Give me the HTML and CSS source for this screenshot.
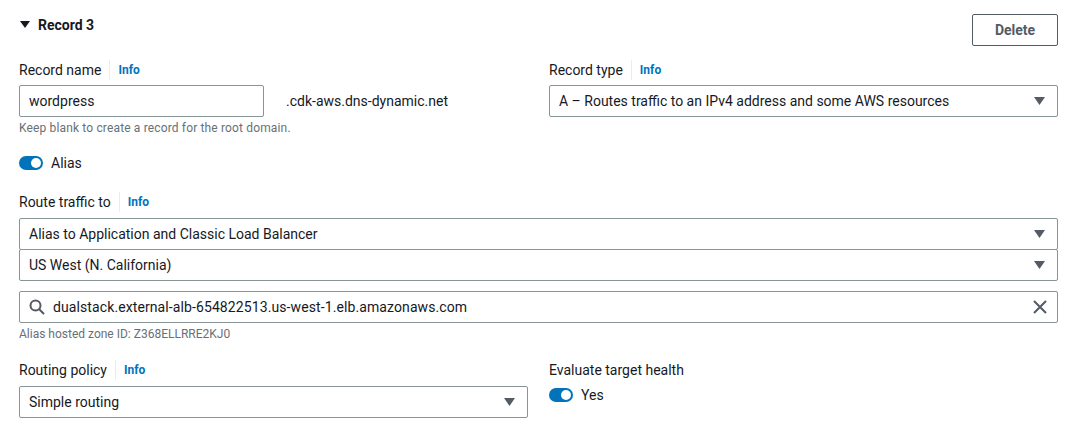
FILE: index.html
```html
<!DOCTYPE html>
<html>
<head>
<meta charset="utf-8">
<link rel="stylesheet" href="styles.css">
</head>
<body>
<div class="page">
  <div class="header">
    <div class="title">
      <svg class="caret" width="10" height="8" viewBox="0 0 10 8"><path d="M0 0 H10 L5 7 Z" fill="#16191f"/></svg>
      <span>Record 3</span>
    </div>
    <button class="btn">Delete</button>
  </div>

  <div class="cols first">
    <div class="col">
      <div class="label"><span>Record name</span><span class="sep"></span><a class="info">Info</a></div>
      <div class="name-row">
        <div class="input name">wordpress</div>
        <span class="suffix">.cdk-aws.dns-dynamic.net</span>
      </div>
      <div class="help">Keep blank to create a record for the root domain.</div>
    </div>
    <div class="col">
      <div class="label"><span>Record type</span><span class="sep"></span><a class="info">Info</a></div>
      <div class="input select">
        <span>A – Routes traffic to an IPv4 address and some AWS resources</span>
        <svg class="arrow" width="11" height="8" viewBox="0 0 11 8"><path d="M0 0 H11 L5.5 8 Z" fill="#545b64"/></svg>
      </div>
    </div>
  </div>

  <div class="toggle-row alias">
    <span class="toggle"><span class="knob"></span></span>
    <span>Alias</span>
  </div>

  <div class="label route"><span>Route traffic to</span><span class="sep"></span><a class="info">Info</a></div>
  <div class="input select">
    <span>Alias to Application and Classic Load Balancer</span>
    <svg class="arrow" width="11" height="8" viewBox="0 0 11 8"><path d="M0 0 H11 L5.5 8 Z" fill="#545b64"/></svg>
  </div>
  <div class="input select stacked">
    <span>US West (N. California)</span>
    <svg class="arrow" width="11" height="8" viewBox="0 0 11 8"><path d="M0 0 H11 L5.5 8 Z" fill="#545b64"/></svg>
  </div>
  <div class="input search">
    <svg class="mag" width="16" height="16" viewBox="0 0 16 16"><circle cx="6.5" cy="6.5" r="5" fill="none" stroke="#545b64" stroke-width="2"/><path d="M10.2 10.2 L14.5 14.5" stroke="#545b64" stroke-width="2" stroke-linecap="round"/></svg>
    <span class="grow">dualstack.external-alb-654822513.us-west-1.elb.amazonaws.com</span>
    <svg class="clear" width="14" height="14" viewBox="0 0 14 14"><path d="M1 1 L13 13 M13 1 L1 13" stroke="#545b64" stroke-width="2"/></svg>
  </div>
  <div class="help zone">Alias hosted zone ID: Z368ELLRRE2KJ0</div>

  <div class="cols last">
    <div class="col">
      <div class="label"><span>Routing policy</span><span class="sep"></span><a class="info">Info</a></div>
      <div class="input select">
        <span>Simple routing</span>
        <svg class="arrow" width="11" height="8" viewBox="0 0 11 8"><path d="M0 0 H11 L5.5 8 Z" fill="#545b64"/></svg>
      </div>
    </div>
    <div class="col">
      <div class="label"><span>Evaluate target health</span></div>
      <div class="toggle-row yes">
        <span class="toggle"><span class="knob"></span></span>
        <span>Yes</span>
      </div>
    </div>
  </div>
</div>
</body>
</html>
```

FILE: styles.css
```css
* { box-sizing: border-box; }
body {
  margin: 0;
  background: #fff;
  font-family: Roboto, "Liberation Sans", Arial, sans-serif;
  font-size: 14px;
  color: #16191f;
}
.page {
  padding: 14px 21px 0 19px;
}
.header {
  display: flex;
  justify-content: space-between;
  align-items: flex-start;
}
.title {
  display: flex;
  align-items: center;
  gap: 8px;
  font-weight: 700;
  line-height: 20px;
  padding: 1px 0 0 1px;
}
.caret { display: block; }
.btn {
  width: 86px;
  height: 32px;
  border: 1px solid #545b64;
  border-radius: 2px;
  background: #fff;
  color: #545b64;
  font: 700 14px Roboto, "Liberation Sans", Arial, sans-serif;
  padding: 0;
}
.cols {
  display: grid;
  grid-template-columns: 1fr 1fr;
  column-gap: 21px;
}
.cols.first { margin-top: 14px; }
.label {
  display: flex;
  align-items: center;
  height: 20px;
  line-height: 20px;
  margin-bottom: 5px;
}
.sep {
  width: 1px;
  height: 20px;
  background: #eaeded;
  margin: 0 8px;
}
.info {
  color: #0073bb;
  font-weight: 700;
  font-size: 12px;
}
.input {
  height: 32px;
  border: 1px solid #879596;
  border-radius: 2px;
  display: flex;
  align-items: center;
  padding: 0 12px 0 9px;
  background: #fff;
}
.name-row {
  display: flex;
  align-items: center;
}
.input.name { width: 245px; }
.suffix { margin-left: 22px; }
.help {
  font-size: 12px;
  line-height: 16px;
  color: #687078;
  margin-top: 3px;
  letter-spacing: 0.15px;
}
.select { justify-content: space-between; }
.arrow { display: block; flex: none; }
.toggle-row {
  display: flex;
  align-items: center;
  gap: 8px;
  line-height: 20px;
}
.toggle-row.alias { margin-top: 17px; }
.toggle {
  width: 24px;
  height: 14px;
  border-radius: 7px;
  background: #0073bb;
  position: relative;
  flex: none;
}
.knob {
  position: absolute;
  right: 2px;
  top: 2px;
  width: 10px;
  height: 10px;
  border-radius: 50%;
  background: #fff;
}
.label.route { margin-top: 19px; margin-bottom: 6px; }
.stacked { margin-top: -1px; }
.search {
  margin-top: 10px;
  gap: 8px;
  letter-spacing: 0.1px;
}
.mag { display: block; flex: none; }
.grow { flex: 1; }
.clear { display: block; flex: none; margin-right: -2px; }
.help.zone { margin-top: 3px; letter-spacing: 0; }
.cols.last { margin-top: 18px; }
.cols.last .label { margin-bottom: 6px; }
.toggle-row.yes { margin-top: -1px; }
```
